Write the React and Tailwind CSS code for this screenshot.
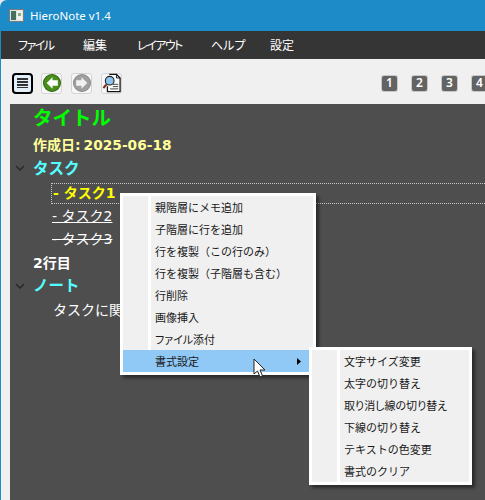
const font = { fontFamily: '"Noto Sans CJK JP", "Noto Sans", sans-serif' };
const contentFont = { fontFamily: '"DejaVu Sans", "Noto Sans CJK JP", sans-serif' };
const tight = ["ファイル添付", "取り消し線の切り替え"];

function Chevron() {
  return (
    <svg width="10" height="6" viewBox="0 0 10 6" className="absolute left-[5px] top-1/2 -translate-y-1/2">
      <path d="M1 1 L5 5 L9 1" fill="none" stroke="#2a2a2a" strokeWidth="1.6" />
    </svg>
  );
}

function Row({ h, pl, chevron, className, children }) {
  return (
    <div style={{ height: h, paddingLeft: pl }} className={"relative flex items-center whitespace-nowrap " + (className || "")}>
      {chevron && <Chevron />}
      {children}
    </div>
  );
}

function NumBtn({ n }) {
  return (
    <div className="w-[15px] h-[15px] shrink-0 rounded-[2px] bg-[#636363] ring-1 ring-[#c8c8c8] text-white text-[12px] font-semibold flex items-center justify-center font-['Noto_Sans']">
      {n}
    </div>
  );
}

function ToolBtn({ children }) {
  return (
    <div className="w-[21px] h-[21px] shrink-0 rounded-[3px] border border-[#d4d4d4] bg-[#f7f7f7] flex items-center justify-center">
      {children}
    </div>
  );
}

function Menu({ items, className, hi }) {
  return (
    <div className={"absolute bg-white p-[3px] shadow-[3px_3px_3px_rgba(0,0,0,0.45)] " + className} style={font}>
      <div className="bg-[#f0f0f0]">
        {items.map((t) => (
          <div
            key={t}
            className={"relative h-[22px] pl-[32px] flex items-center text-[11px] text-[#1a1a1a] whitespace-nowrap " + (t === hi ? "bg-[#90c8f6] " : "") + (tight.includes(t) ? "[font-feature-settings:'palt']" : "")}
          >
            {t !== hi && <div className="absolute left-[25px] top-0 bottom-0 w-[3px] bg-white" />}
            {t}
            {t === hi && (
              <svg width="4" height="7" viewBox="0 0 5 8" preserveAspectRatio="none" className="absolute right-[12px] top-[8px]">
                <path d="M0 0 L5 4 L0 8 Z" fill="#000" />
              </svg>
            )}
          </div>
        ))}
      </div>
    </div>
  );
}

export default function App() {
  return (
    <div className="relative w-[485px] h-[500px] overflow-hidden bg-[#e8e8e8]" style={font}>
      <div className="h-full bg-[#1c8bc7] rounded-tl-[7px]">
        <div className="h-[31px] flex items-center pl-[9px] gap-[6px]">
          <svg width="15" height="13" viewBox="0 0 15 13">
            <rect x="0" y="0" width="15" height="13" fill="#dfe3e1" />
            <rect x="0.5" y="0.5" width="14" height="12" fill="none" stroke="#7a7a7a" />
            <rect x="2" y="2" width="5" height="9" fill="#46705e" />
            <rect x="8" y="2" width="5" height="9" fill="#eef2ee" />
            <rect x="9" y="4" width="3" height="3" fill="#7fae8c" />
          </svg>
          <span className="text-white text-[11.5px] font-['Noto_Sans']">HieroNote v1.4</span>
        </div>
        <div className="h-[28px] bg-[#353535] ml-[1px] flex items-center text-white text-[12px] pl-[17px] [font-feature-settings:'palt']">
          <span className="w-[65px] tracking-[-1.5px]">ファイル</span>
          <span className="w-[54px]">編集</span>
          <span className="w-[74px] tracking-[-1.5px]">レイアウト</span>
          <span className="w-[59px]">ヘルプ</span>
          <span>設定</span>
        </div>
        <div className="h-[45px] bg-[#f0f0f0] ml-[1px] flex items-center pl-[11px] pt-[3px]">
          <div className="w-[21px] h-[21px] shrink-0 rounded-[4px] border-2 border-black bg-[#e3f0fa] flex flex-col items-center justify-center gap-[1px]">
            <div className="w-[11px] h-[2px] bg-[#333]" />
            <div className="w-[11px] h-[2px] bg-[#333]" />
            <div className="w-[11px] h-[2px] bg-[#333]" />
            <div className="w-[11px] h-[1px] bg-[#333]" />
          </div>
          <div className="ml-[8px] shrink-0">
            <ToolBtn>
              <svg width="18" height="18" viewBox="0 0 17 17">
                <circle cx="8.5" cy="8.5" r="8" fill="#4a8f1c" stroke="#2f6a10" />
                <path d="M9 3 L3.5 8.5 L9 14 L9 11 L14 11 L14 6 L9 6 Z" fill="#fff" />
              </svg>
            </ToolBtn>
          </div>
          <div className="ml-[9px] shrink-0">
            <ToolBtn>
              <svg width="18" height="18" viewBox="0 0 17 17">
                <circle cx="8.5" cy="8.5" r="8" fill="#a0a0a0" stroke="#8c8c8c" />
                <path d="M8 3 L13.5 8.5 L8 14 L8 11 L3 11 L3 6 L8 6 Z" fill="#f2f2f2" />
              </svg>
            </ToolBtn>
          </div>
          <div className="ml-[9px] shrink-0">
            <ToolBtn>
              <svg width="20" height="20" viewBox="0 0 21 21">
                <path d="M8 1 L16 1 L20 5 L20 20 L6 20 L6 14" fill="#fff" stroke="#111" strokeWidth="1.4" />
                <path d="M16 1 L16 5 L20 5" fill="none" stroke="#111" />
                <path d="M12 12 H18 M12 14.5 H18 M9 17 H18" stroke="#333" strokeWidth="1" />
                <circle cx="8.5" cy="8" r="4.8" fill="#8cc4f0" stroke="#222" strokeWidth="1.2" />
                <path d="M5 12 L1.5 16" stroke="#7a2a1a" strokeWidth="2.2" />
              </svg>
            </ToolBtn>
          </div>
          <div className="ml-[260px] flex gap-[15px] shrink-0">
            <NumBtn n="1" />
            <NumBtn n="2" />
            <NumBtn n="3" />
            <NumBtn n="4" />
          </div>
        </div>
        <div className="h-[396px] bg-[#f0f0f0] ml-[1px] pl-[9px]">
          <div className="h-full bg-[#4e4e4e] pt-[2px]" style={contentFont}>
            <Row h={25} pl={23} className="text-[#00ff00] text-[19.5px] font-bold">タイトル</Row>
            <Row h={25} pl={23} className="text-[#ffff99] text-[14px] font-bold pt-[4px]">
              作成日: <span className="text-[13.75px] ml-[3px]">2025-06-18</span>
            </Row>
            <Row h={24} pl={23} chevron className="text-[#55ffff] text-[15.5px] font-bold pt-[4px]">タスク</Row>
            <div className="h-[21px] ml-[41px] mt-[3px] border border-dotted border-[#c8c8c8] border-r-0 flex items-center pl-[1px] text-[#ffff00] text-[14px] font-bold whitespace-nowrap">- タスク1</div>
            <Row h={23} pl={42} className="text-white text-[14px] underline pt-[1px]">- タスク2</Row>
            <Row h={23} pl={42} className="text-white text-[14px] line-through pt-[1px]">- タスク3</Row>
            <Row h={24} pl={23} className="text-white text-[14px] font-bold pt-[3px]">2行目</Row>
            <Row h={23} pl={23} chevron className="text-[#55ffff] text-[15.5px] font-bold pt-[2px]">ノート</Row>
            <Row h={26} pl={43} className="text-white text-[14px] pt-[1px]">タスクに関する</Row>
          </div>
        </div>
      </div>

      <Menu
        className="left-[120px] top-[193px] w-[196px]"
        hi="書式設定"
        items={["親階層にメモ追加", "子階層に行を追加", "行を複製（この行のみ）", "行を複製（子階層も含む）", "行削除", "画像挿入", "ファイル添付", "書式設定"]}
      />
      <Menu
        className="left-[309px] top-[347px] w-[163px]"
        items={["文字サイズ変更", "太字の切り替え", "取り消し線の切り替え", "下線の切り替え", "テキストの色変更", "書式のクリア"]}
      />
      <svg width="14" height="21" viewBox="0 0 14 21" className="absolute left-[253px] top-[358px]">
        <path d="M1 1 L1 16 L4.5 13 L7 19 L9.5 18 L7 12 L12 12 Z" fill="#fff" stroke="#222" strokeWidth="1" />
      </svg>
    </div>
  );
}
